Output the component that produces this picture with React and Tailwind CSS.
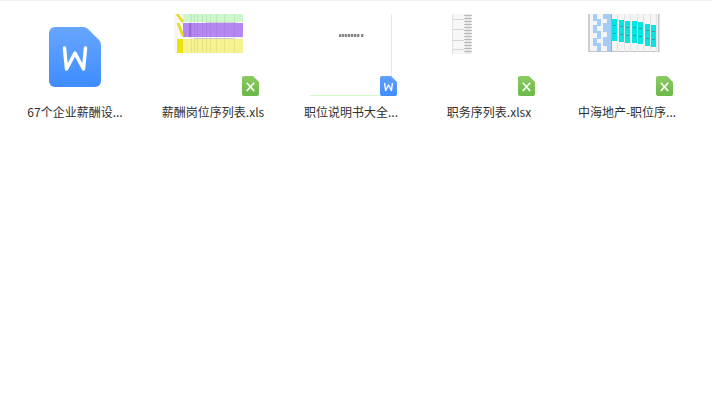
import React from "react";

const files = [
  { name: "67个企业薪酬设...", preview: "word" },
  { name: "薪酬岗位序列表.xls", preview: "sheet", badge: "x" },
  { name: "职位说明书大全...", preview: "doc", badge: "w" },
  { name: "职务序列表.xlsx", preview: "table", badge: "x" },
  { name: "中海地产-职位序...", preview: "chart", badge: "x" },
];

// Coloured workbook page
function SheetThumb() {
  const cols = [47, 50, 53, 58, 62, 66, 72, 80, 90];
  return (
    <g style={{ filter: "blur(0.5px)" }}>
      <rect x="30" y="0" width="69" height="39" fill="#f6f6f2" />
      <rect x="39" y="0" width="60" height="8" fill="#cdf6ca" />
      <rect x="39" y="9" width="60" height="14" fill="#b587f2" />
      <rect x="33" y="25" width="66" height="14" fill="#f6f290" />
      <rect x="33" y="25" width="6" height="14" fill="#ebe30a" />
      <path d="M33 0 L39 8 M34 9 L39 22" stroke="#e6da10" strokeWidth="2.5" />
      <rect x="45" y="9" width="2" height="14" fill="#9a6cd0" />
      {cols.map((x) => (
        <rect key={x} x={x} y="0" width="0.6" height="39" fill="#000" opacity="0.1" />
      ))}
      <rect x="62" y="8" width="30" height="1" fill="#aaa" opacity="0.5" />
      <rect x="50" y="24" width="40" height="1" fill="#aaa" opacity="0.5" />
    </g>
  );
}

// Blank page with a small title and pale green rules
function DocThumb() {
  const marks = [57, 60, 63, 66, 69, 72, 75, 79];
  return (
    <g>
      <rect x="109" y="0" width="1" height="82" fill="#d6f8c8" />
      <rect x="28" y="81" width="81" height="1" fill="#d6f8c8" />
      <g style={{ filter: "blur(0.4px)" }}>
        {marks.map((x) => (
          <rect key={x} x={x} y="20" width="2.4" height="3" fill="#555" opacity="0.7" />
        ))}
      </g>
    </g>
  );
}

// Narrow grey table
function TableThumb() {
  const rows = [1, 4, 7, 10, 13, 16, 19, 22, 25, 28, 31, 34, 37];
  return (
    <g style={{ filter: "blur(0.5px)" }}>
      <rect x="32" y="0" width="20" height="40" fill="#f7f7f7" />
      <rect x="32" y="0" width="1" height="40" fill="#e0e0e0" />
      <rect x="45" y="0" width="6" height="40" fill="#e6e6e6" />
      {rows.map((y) => (
        <rect key={y} x="44" y={y} width="8" height="1" fill="#bbb" />
      ))}
      {[5, 15, 26, 35].map((y) => (
        <rect key={y} x="33" y={y} width="11" height="0.8" fill="#ccc" />
      ))}
    </g>
  );
}

// Grade chart with blue steps and cyan bars
function ChartThumb() {
  const bars = [
    [54, 5], [61, 6], [67, 7], [74, 7], [80, 8], [87, 10], [93, 11],
  ];
  const steps = [
    [35, 0, 4, 7], [35, 11, 4, 8], [35, 24, 4, 8],
    [39, 5, 4, 7], [39, 17, 4, 8], [39, 29, 4, 9],
    [45, 0, 4, 5], [45, 9, 4, 9], [45, 23, 4, 9],
  ];
  const gridLines = [59, 66, 72, 79, 85, 92, 98];
  return (
    <g style={{ filter: "blur(0.5px)" }}>
      <rect x="30" y="0" width="71" height="38" fill="#f5f5f5" />
      <rect x="30" y="0" width="2" height="38" fill="#cfcfcf" />
      <rect x="100" y="0" width="1.5" height="38" fill="#c4c4c4" />
      <rect x="30" y="37" width="71" height="1" fill="#c4c4c4" />
      {gridLines.map((x) => (
        <rect key={x} x={x} y="0" width="1" height="38" fill="#e2e2e2" />
      ))}
      {steps.map(([x, y, w, h]) => (
        <rect key={`${x}-${y}`} x={x} y={y} width={w} height={h} fill="#a3cdf7" />
      ))}
      <rect x="49" y="0" width="4" height="38" fill="#a3cdf7" />
      <rect x="53" y="0" width="0.8" height="38" fill="#8a9cae" />
      {bars.map(([x, y]) => (
        <g key={x}>
          <rect x={x} y={y} width="5" height="22" fill="#08e4e2" />
          <rect x={x + 1} y={y + 6} width="3" height="1" fill="#2a9ea6" />
          <rect x={x + 1} y={y + 14} width="3" height="1" fill="#2a9ea6" />
        </g>
      ))}
    </g>
  );
}

function WordIcon() {
  return (
    <g transform="translate(43 13)">
      <path
        d="M6 0 H34 Q37 0 39 2 L50 13 Q52 15 52 18 V54 A6 6 0 0 1 46 60 H6 A6 6 0 0 1 0 54 V6 A6 6 0 0 1 6 0 Z"
        fill="url(#wordFill)"
      />
      <path
        d="M15.5 21 L17.5 42 L26 26 L34.5 42 L36.5 21"
        fill="none"
        stroke="#fff"
        strokeWidth="3.5"
        strokeLinecap="round"
        strokeLinejoin="round"
      />
    </g>
  );
}

function Badge({ type }) {
  const id = type === "w" ? "badgeBlue" : "badgeGreen";
  return (
    <svg viewBox="0 0 17 20" className="absolute left-[98px] top-[62px] h-5 w-[17px]">
      <path
        d="M2 0 H11 L17 6 V18 A2 2 0 0 1 15 20 H2 A2 2 0 0 1 0 18 V2 A2 2 0 0 1 2 0 Z"
        fill={`url(#${id})`}
      />
      {type === "x" ? (
        <path d="M4.8 6.8 L12.2 15 M12.2 6.8 L4.8 15" stroke="#fff" strokeWidth="1.6" />
      ) : (
        <path d="M4.6 7 L5.6 14.5 L8.5 9 L11.4 14.5 L12.4 7" fill="none" stroke="#fff" strokeWidth="1.4" strokeLinejoin="round" />
      )}
    </svg>
  );
}

function Preview({ kind }) {
  return (
    <svg viewBox="0 0 138 82" className="block h-[82px] w-[138px]">
      {kind === "word" && <WordIcon />}
      {kind === "sheet" && <SheetThumb />}
      {kind === "doc" && <DocThumb />}
      {kind === "table" && <TableThumb />}
      {kind === "chart" && <ChartThumb />}
    </svg>
  );
}

export default function App() {
  return (
    <div className="min-h-[411px] w-[712px] overflow-hidden border-t border-[#efefef] bg-white font-['Noto_Sans_CJK_SC','Noto_Sans',sans-serif]">
      {/* shared gradients */}
      <svg className="absolute h-0 w-0">
        <defs>
          <linearGradient id="wordFill" x1="0" y1="0" x2="0" y2="1">
            <stop offset="0" stopColor="#67a6ff" />
            <stop offset="1" stopColor="#3f8cff" />
          </linearGradient>
          <linearGradient id="badgeGreen" x1="0" y1="0" x2="0" y2="1">
            <stop offset="0" stopColor="#8ccb62" />
            <stop offset="1" stopColor="#6bb84a" />
          </linearGradient>
          <linearGradient id="badgeBlue" x1="0" y1="0" x2="0" y2="1">
            <stop offset="0" stopColor="#5fa2ff" />
            <stop offset="1" stopColor="#3f8cff" />
          </linearGradient>
        </defs>
      </svg>

      <div className="grid grid-cols-[repeat(5,138px)] pl-[6px] pt-[13px]">
        {files.map((file) => (
          <div key={file.name} className="w-[138px]">
            <div className="relative h-[82px]">
              <Preview kind={file.preview} />
              {file.badge && <Badge type={file.badge} />}
            </div>
            <p className="mt-[6px] text-center text-xs leading-5 text-[#2f2f2f]">{file.name}</p>
          </div>
        ))}
      </div>
    </div>
  );
}
